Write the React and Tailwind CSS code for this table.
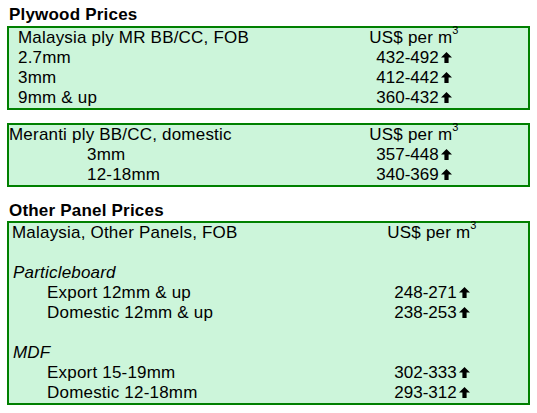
import React from 'react';

const UpArrow = () => (
  <svg
    width="11"
    height="11"
    viewBox="0 0 11 11"
    className="inline-block align-baseline ml-[2px]"
  >
    <polygon points="5.5,0 11,5.5 7.6,5.5 7.6,11 3.4,11 3.4,5.5 0,5.5" fill="#000" />
  </svg>
);

const PerM3 = () => (
  <span>
    US$ per m<span className="relative -top-[9px] text-[11px] leading-none">3</span>
  </span>
);

const Price = ({ value }) => (
  <span className="whitespace-nowrap tracking-normal">
    {value}
    <UpArrow />
  </span>
);

const Row = ({ label, price, cols, indent = '', italic = false }) => (
  <div className={`grid ${cols}`}>
    <div className={`${indent} ${italic ? 'italic' : ''} whitespace-nowrap`}>{label}</div>
    <div className="text-center">{price}</div>
  </div>
);

const Blank = () => <div className="h-[20px]" />;

export default function App() {
  const c1 = 'grid-cols-[345px_120px]';
  const c3 = 'grid-cols-[363px_120px]';

  return (
    <div className="bg-white w-[537px] h-[413px] overflow-hidden pt-[5px] pl-[7px] font-['Liberation_Sans',Arial,sans-serif] text-[17px] leading-[20px] tracking-[0.2px] text-black">
      <h2 className="font-bold pl-[2px]">Plywood Prices</h2>
      <div className="mt-[1px] w-[523px] border-2 border-[#008000] bg-[#ccf5da]">
        <Row cols={c1} indent="pl-[9px]" label="Malaysia ply MR BB/CC, FOB" price={<PerM3 />} />
        <Row cols={c1} indent="pl-[9px]" label="2.7mm" price={<Price value="432-492" />} />
        <Row cols={c1} indent="pl-[9px]" label="3mm" price={<Price value="412-442" />} />
        <Row cols={c1} indent="pl-[9px]" label="9mm & up" price={<Price value="360-432" />} />
      </div>

      <div className="mt-[13px] w-[523px] border-2 border-[#008000] bg-[#ccf5da]">
        <Row cols={c1} label="Meranti ply BB/CC, domestic" price={<PerM3 />} />
        <Row cols={c1} indent="pl-[78px]" label="3mm" price={<Price value="357-448" />} />
        <Row cols={c1} indent="pl-[78px]" label="12-18mm" price={<Price value="340-369" />} />
      </div>

      <h2 className="mt-[14px] font-bold pl-[2px]">Other Panel Prices</h2>
      <div className="w-[523px] border-2 border-[#008000] bg-[#ccf5da]">
        <Row cols={c3} indent="pl-[3px]" label="Malaysia, Other Panels, FOB" price={<PerM3 />} />
        <Blank />
        <Row cols={c3} indent="pl-[4px]" italic label="Particleboard" price="" />
        <Row cols={c3} indent="pl-[38px]" label="Export 12mm & up" price={<Price value="248-271" />} />
        <Row cols={c3} indent="pl-[38px]" label="Domestic 12mm & up" price={<Price value="238-253" />} />
        <Blank />
        <Row cols={c3} indent="pl-[4px]" italic label="MDF" price="" />
        <Row cols={c3} indent="pl-[38px]" label="Export 15-19mm" price={<Price value="302-333" />} />
        <Row cols={c3} indent="pl-[38px]" label="Domestic 12-18mm" price={<Price value="293-312" />} />
      </div>
    </div>
  );
}
